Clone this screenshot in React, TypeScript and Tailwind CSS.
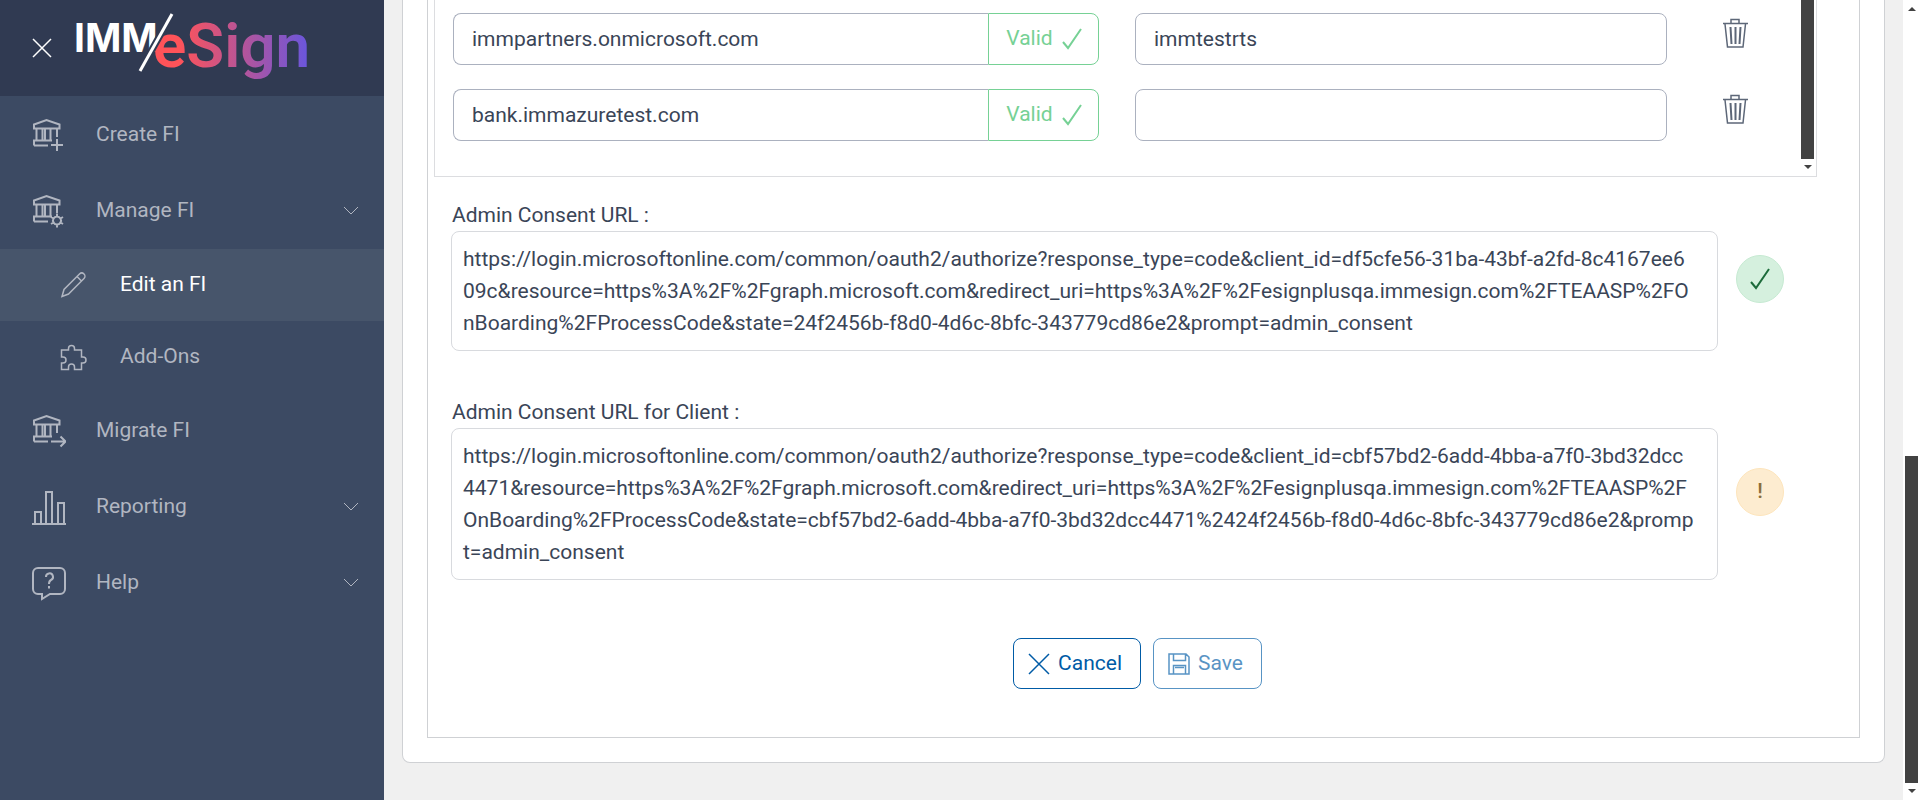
import React from "react";

const bankBody = "M2 10.5V6.500L14.500 2 27.500 6.500v4zM4.500 11v11M10.500 11v11M13 11v11M18.500 11v11M25 11v8M2 27.500v-5h18M2 27.500h14";

function Icon({ size, d, width = 1.5, className = "" }: { size: number; d: string; width?: number; className?: string }) {
  return (
    <svg width={size} height={size} viewBox={`0 0 ${size} ${size}`} fill="none" stroke="currentColor" strokeWidth={width} className={`shrink-0 ${className}`} aria-hidden="true">
      <path d={d} />
    </svg>
  );
}

const icons = {
  create: bankBody + "M25 21v12M19 27h12",
  manage: bankBody + "M25 22.500a4 4 0 1 0 .01 0M25 19.500v3M25 30.500v3M19 23l2.500 1.500M28.500 28.500l2.500 1.500M19 30l2.500-1.500M28.500 24.500l2.500-1.500",
  migrate: bankBody + "M19 27.500h14M28.500 22.500l5 5-5 5",
  reporting: "M0 35h34M3 34V23h6v11M14 34V3h6v31M26 34V14h6v20",
  help: "M6 2h22a5 5 0 0 1 5 5v16a5 5 0 0 1-5 5H18l-8 5v-5H6a5 5 0 0 1-5-5V7a5 5 0 0 1 5-5z",
  helpMark: "M14 11a3.500 3.500 0 1 1 5 3q-2 1-2 4M17 20v2.500",
  pencil: "M2 24.500L4 17.500 19.500 2a3 3 0 0 1 4.500 4.500L8.500 22zM17 4.500l4.500 4.500",
  puzzle: "M1.500 6h7V4.500a3 3 0 0 1 6 0V6h7v7h1.500a3 3 0 0 1 0 6h-1.500v6.500h-7V23a3 3 0 0 0-6 0v2.500h-7V19H3a3 3 0 0 0 0-6H1.500z",
};

function NavItem({ label, icon, open }: { label: string; icon: React.ReactNode; open?: boolean }) {
  return (
    <a href="#" className="flex h-19 items-center pr-6 pl-8 text-[#b1b6c1]">
      <span className="flex w-16 items-center">{icon}</span>
      <span className="flex-1">{label}</span>
      {open && <Icon size={18} d="M2 5l7 7 7-7" width={1} />}
    </a>
  );
}

function SubItem({ label, icon, active }: { label: string; icon: React.ReactNode; active?: boolean }) {
  return (
    <a href="#" className={active ? "flex h-18 items-center bg-[#47556b] pl-15 text-white" : "flex h-18 items-center pl-15 text-[#b1b6c1]"}>
      <span className="flex w-15 items-center text-[#b1b6c1]">{icon}</span>
      <span>{label}</span>
    </a>
  );
}

function TrashIcon() {
  return (
    <svg width="32" height="32" viewBox="0 0 32 32" fill="none" stroke="currentColor" aria-hidden="true">
      <path d="M4 6.500h25M12 6V2.500h8V6" strokeWidth="1.500" />
      <path d="M6 7l2.500 23h15.500L26.500 7" strokeWidth="1.500" />
      <path d="M11.500 10l1 17M16.500 10v17M21.500 10l-1 17" strokeWidth="2" />
    </svg>
  );
}

function DomainRow({ domain, tenant }: { domain: string; tenant: string }) {
  return (
    <div className="flex items-start">
      <div className="flex flex-1">
        <input aria-label="Domain" defaultValue={domain} className="h-13 min-w-0 flex-1 rounded-l-lg border border-r-0 border-[#abb1bf] px-[18px] outline-none" />
        <span className="flex h-13 w-[111px] items-center justify-center gap-2 rounded-r-lg border border-[#76d195] pl-0.5 text-[#76d195]">
          Valid
          <Icon size={22} d="M2 14l5 6L20 1" width={2} />
        </span>
      </div>
      <input aria-label="Tenant name" defaultValue={tenant} className="ml-9 h-13 w-[532px] rounded-lg border border-[#abb1bf] px-[18px] outline-none" />
      <button type="button" aria-label="Delete domain" className="mt-1 ml-13 text-[#5d6778]">
        <TrashIcon />
      </button>
    </div>
  );
}

function ConsentUrl({ id, label, value, children }: { id: string; label: string; value: string; children: React.ReactNode }) {
  return (
    <div className="flex items-center">
      <div className="flex flex-1 flex-col">
        <label htmlFor={id} className="pl-px leading-8">{label}</label>
        <textarea id={id} readOnly value={value} className="field-sizing-content resize-none overflow-hidden rounded-lg border border-[#d8dade] py-[11px] pr-[22px] pl-[11px] leading-8 break-all outline-none" />
      </div>
      {children}
    </div>
  );
}

export default function App() {
  return (
    <div className="flex min-h-screen bg-[#f0f0f0] font-[Roboto,sans-serif] text-[21px] text-[#3a4557]">
      <aside className="w-96 shrink-0 bg-[#3c4a63]">
        <header className="flex h-24 items-center bg-[#303a52] pl-8">
          <button type="button" aria-label="Close menu" className="text-white">
            <Icon size={20} d="M1 1l18 18M19 1L1 19" width={1.5} />
          </button>
          <svg width="250" height="96" viewBox="0 0 250 96" className="ml-5" role="img" aria-label="IMM eSign">
            <defs>
              <linearGradient id="brand" x1="84" y1="0" x2="235" y2="0" gradientUnits="userSpaceOnUse">
                <stop offset="0.15" stopColor="#ff5359" />
                <stop offset="1" stopColor="#6b56db" />
              </linearGradient>
            </defs>
            <text x="2" y="52" fontFamily="Inter" fontWeight="700" fontSize="39" fill="#fff">IMM</text>
            <text x="81" y="67" fontFamily="Roboto" fontWeight="600" fontSize="62" fill="url(#brand)">eSign</text>
            <path d="M68 71L100 14" stroke="#303a52" strokeWidth="7" />
            <path d="M68 71L100 14" stroke="#fff" strokeWidth="3" />
          </svg>
        </header>
        <nav className="flex flex-col pt-px">
          <NavItem label="Create FI" icon={<Icon size={34} d={icons.create} width={2} />} />
          <NavItem label="Manage FI" icon={<Icon size={34} d={icons.manage} width={2} />} open />
          <SubItem label="Edit an FI" icon={<Icon size={27} d={icons.pencil} />} active />
          <SubItem label="Add-Ons" icon={<Icon size={27} d={icons.puzzle} />} />
          <NavItem label="Migrate FI" icon={<Icon size={34} d={icons.migrate} width={2} />} />
          <NavItem label="Reporting" icon={<Icon size={36} d={icons.reporting} width={2} />} open />
          <NavItem label="Help" icon={<Icon size={35} d={icons.help + icons.helpMark} width={2} />} open />
        </nav>
      </aside>

      <main className="min-w-0 flex-1 px-[18px]">
        <div className="rounded-b-lg border border-t-0 border-[#cfd1d4] bg-white px-6 pb-6">
          <div className="border border-t-0 border-[#cfd1d4] pb-12">
            <div className="mr-[42px] ml-1.5 flex border border-t-0 border-[#dcdde0]">
              <div className="flex flex-1 flex-col gap-6 pt-[13px] pr-[50px] pb-[35px] pl-[18px]">
                <DomainRow domain="immpartners.onmicrosoft.com" tenant="immtestrts" />
                <DomainRow domain="bank.immazuretest.com" tenant="" />
              </div>
              <div className="mr-0.5 flex w-[13px] flex-col items-center">
                <div className="w-full flex-1 bg-[#424242]" />
                <svg width="8" height="17" viewBox="0 0 8 17" fill="#424242" aria-hidden="true"><path d="M0 6h8L4 10z" /></svg>
              </div>
            </div>

            <div className="flex flex-col gap-[45px] pt-[22px] pr-[75px] pl-[23px]">
              <ConsentUrl
                id="consent"
                label="Admin Consent URL :"
                value="https://login.microsoftonline.com/common/oauth2/authorize?response_type=code&client_id=df5cfe56-31ba-43bf-a2fd-8c4167ee609c&resource=https%3A%2F%2Fgraph.microsoft.com&redirect_uri=https%3A%2F%2Fesignplusqa.immesign.com%2FTEAASP%2FOnBoarding%2FProcessCode&state=24f2456b-f8d0-4d6c-8bfc-343779cd86e2&prompt=admin_consent"
              >
                <span className="mt-2 ml-[18px] flex size-12 items-center justify-center rounded-full border border-[#c6ead2] bg-[#d5f0de] text-[#1d6b3b]">
                  <Icon size={22} d="M2 14l5 6L20 1" width={2} />
                </span>
              </ConsentUrl>
              <ConsentUrl
                id="consent-client"
                label="Admin Consent URL for Client :"
                value="https://login.microsoftonline.com/common/oauth2/authorize?response_type=code&client_id=cbf57bd2-6add-4bba-a7f0-3bd32dcc4471&resource=https%3A%2F%2Fgraph.microsoft.com&redirect_uri=https%3A%2F%2Fesignplusqa.immesign.com%2FTEAASP%2FOnBoarding%2FProcessCode&state=cbf57bd2-6add-4bba-a7f0-3bd32dcc4471%2424f2456b-f8d0-4d6c-8bfc-343779cd86e2&prompt=admin_consent"
              >
                <span className="mt-2 ml-[18px] flex size-12 items-center justify-center rounded-full border border-[#fde5bc] bg-[#fdecd0] font-medium text-[#8a6d3b]">!</span>
              </ConsentUrl>
            </div>

            <div className="flex justify-center gap-3 pt-[58px] pr-3">
              <button type="button" className="flex h-[51px] items-center gap-2 rounded-lg border border-[#005ba6] pr-[18px] pl-[14px] text-[#005ba6]">
                <Icon size={22} d="M1 1l20 20M21 1L1 21" />
                Cancel
              </button>
              <button type="button" disabled className="flex h-[51px] items-center gap-2 rounded-lg border border-[#005ba6] pr-[18px] pl-[14px] text-[#005ba6] opacity-65">
                <Icon size={22} d="M1 1h17l3 3v17H1zM5.500 1v6.500h12V1M5.500 21v-8.500h12V21M7 14.500h9" />
                Save
              </button>
            </div>
          </div>
        </div>
      </main>

      <div className="flex w-[17px] flex-col items-center bg-white">
        <svg width="8" height="17" viewBox="0 0 8 17" fill="#424242" aria-hidden="true"><path d="M0 11h8L4 7z" /></svg>
        <div className="grow-[439]" />
        <div className="w-[13px] grow-[327] bg-[#424242]" />
        <svg width="8" height="17" viewBox="0 0 8 17" fill="#424242" aria-hidden="true"><path d="M0 6h8L4 10z" /></svg>
      </div>
    </div>
  );
}
